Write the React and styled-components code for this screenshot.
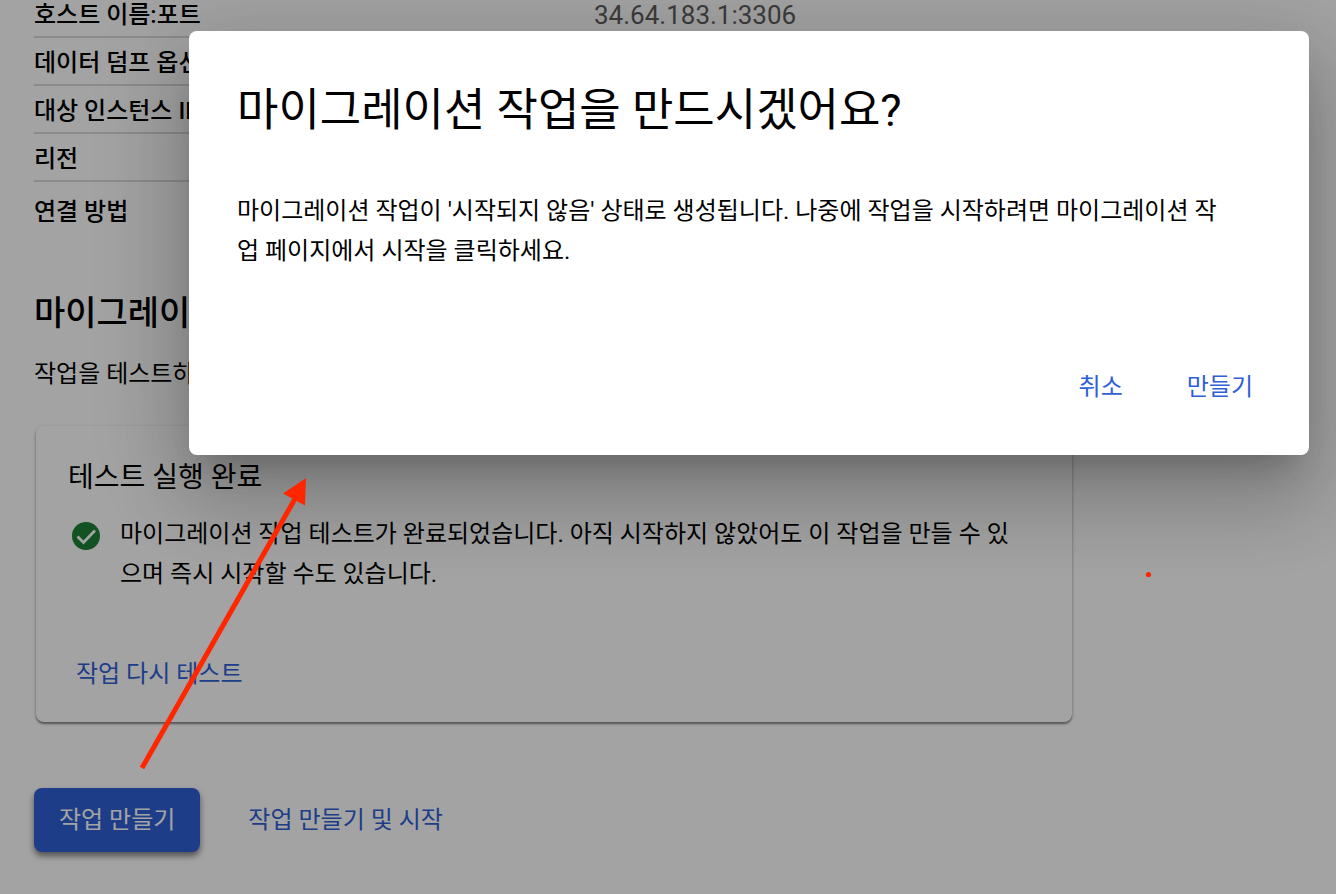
import React from "react";
import { styled, createGlobalStyle } from "styled-components";

/*          STYLES          */
const GlobalStyle = createGlobalStyle`
*{
box-sizing: border-box;
}
body{
margin: 0;
background-color: #ffffff;
color: #000000;
font-family: Roboto, "Noto Sans CJK KR", sans-serif;
font-size: 24px;
line-height: 40px;
overflow: hidden;
}
`
//Page
const Page = styled.main`
position: relative;
min-height: 100vh;
padding: 0 34px;
overflow: hidden;
`
const Content = styled.div`
max-width: 1040px;
`
//Details
const DetailTable = styled.table`
width: 100%;
border-collapse: collapse;
table-layout: fixed;
`
const DetailRow = styled.tr`
height: ${({$height}) => $height || 48}px;
border-bottom: ${({$last}) => $last ? "none" : "2px solid #dadada"};
`
const DetailName = styled.th`
width: 560px;
padding: 0 0 6px;
font-weight: 500;
line-height: 30px;
text-align: left;
vertical-align: bottom;
`
const DetailValue = styled.td`
padding: 0 0 6px;
color: #5f5f5f;
font-size: 26px;
line-height: 30px;
vertical-align: bottom;
`
//Test section
const SectionTitle = styled.h2`
margin: 52px 0 0;
font-size: 34px;
font-weight: 500;
line-height: 56px;
`
const SectionText = styled.p`
margin: 13px 0 0;
`
const Card = styled.section`
margin: 32px 2px 0;
padding: 32px 32px 24px;
border-radius: 8px;
box-shadow: 0 2px 2px rgba(0,0,0,.4), 0 1px 4px rgba(0,0,0,.16);
`
const CardTitle = styled.h3`
margin: 0;
font-size: 28px;
font-weight: 400;
line-height: 40px;
`
const Status = styled.div`
display: flex;
gap: 16px;
margin-top: 16px;
`
const StatusIcon = styled.svg`
flex: none;
width: 36px;
height: 36px;
margin-top: 4px;
`
const StatusText = styled.p`
margin: 0;
`
const CardActions = styled.div`
margin-top: 56px;
`
//Buttons
const TextButton = styled.button`
height: ${({$tall}) => $tall ? 64 : 48}px;
padding: 0 8px;
border: none;
border-radius: 8px;
background: none;
color: #3060d6;
font: inherit;
cursor: pointer;
`
const PrimaryButton = styled(TextButton)`
padding: 0 25px;
background-color: #3060d6;
color: #ffffff;
box-shadow: 0 4px 6px rgba(0,0,0,.5);
`
const PageActions = styled.div`
display: flex;
gap: 40px;
margin-top: 66px;
`
//Dialog
const Backdrop = styled.div`
position: absolute;
inset: 0;
background-color: rgba(0,0,0,.36);
`
const Dialog = styled.div`
position: absolute;
top: 31px;
left: 189px;
right: 27px;
padding: 48px 48px 44px;
border-radius: 8px;
background-color: #ffffff;
box-shadow: 0 22px 30px -14px rgba(0,0,0,.2), 0 48px 76px 6px rgba(0,0,0,.14), 0 18px 92px 16px rgba(0,0,0,.12);
`
const DialogTitle = styled.h1`
margin: 0;
font-size: 45px;
font-weight: 400;
line-height: 64px;
`
const DialogText = styled.p`
margin: 48px 0 0;
`
const DialogActions = styled.div`
display: flex;
justify-content: flex-end;
gap: 48px;
margin-top: 92px;
`
//Markup over the page
const Marks = styled.svg`
position: absolute;
top: 0;
left: 0;
pointer-events: none;
`

const details = [
    {name: "호스트 이름:포트", value: "34.64.183.1:3306", height: 36},
    {name: "데이터 덤프 옵션"},
    {name: "대상 인스턴스 ID"},
    {name: "리전"},
    {name: "연결 방법", height: 52, last: true},
]

/*          COMPONENTS          */
function Details(){
    return(
        <DetailTable>
            <tbody>
                {details.map((detail) => (
                    <DetailRow key={detail.name} $height={detail.height} $last={detail.last}>
                        <DetailName scope="row">{detail.name}</DetailName>
                        <DetailValue>{detail.value}</DetailValue>
                    </DetailRow>
                ))}
            </tbody>
        </DetailTable>
    );
}

function TestCard(){
    return(
        <Card>
            <CardTitle>테스트 실행 완료</CardTitle>
            <Status>
                <StatusIcon viewBox="0 0 36 36" aria-hidden="true">
                    <circle cx="18" cy="18" r="14" fill="#1e8136" />
                    <path d="M9.5 18.5l6 6L27 12.5" fill="none" stroke="#ffffff" strokeWidth="2.8" />
                </StatusIcon>
                <StatusText>
                    마이그레이션 작업 테스트가 완료되었습니다. 아직 시작하지 않았어도 이 작업을 만들 수 있<br/>
                    으며 즉시 시작할 수도 있습니다.
                </StatusText>
            </Status>
            <CardActions>
                <TextButton type="button">작업 다시 테스트</TextButton>
            </CardActions>
        </Card>
    );
}

function CreateDialog(){
    return(
        <Dialog role="dialog" aria-modal="true" aria-labelledby="dialog-title">
            <DialogTitle id="dialog-title">마이그레이션 작업을 만드시겠어요?</DialogTitle>
            <DialogText>
                마이그레이션 작업이 '시작되지 않음' 상태로 생성됩니다. 나중에 작업을 시작하려면 마이그레이션 작<br/>
                업 페이지에서 시작을 클릭하세요.
            </DialogText>
            <DialogActions>
                <TextButton type="button">취소</TextButton>
                <TextButton type="button">만들기</TextButton>
            </DialogActions>
        </Dialog>
    );
}

function App(){
    return(
        <>
            <GlobalStyle />
            <Page>
                <Content>
                    <Details />
                    <SectionTitle>마이그레이션</SectionTitle>
                    <SectionText>작업을 테스트하기</SectionText>
                    <TestCard />
                    <PageActions>
                        <PrimaryButton type="button" $tall>작업 만들기</PrimaryButton>
                        <TextButton type="button" $tall>작업 만들기 및 시작</TextButton>
                    </PageActions>
                </Content>
                <Backdrop />
                <CreateDialog />
                <Marks width="1336" height="894" viewBox="0 0 1336 894" aria-hidden="true">
                    <path d="M142 768L296 497" stroke="#ff2600" strokeWidth="5" />
                    <path d="M306 478L283 493.500L305 505.500Z" fill="#ff2600" />
                    <circle cx="1148.500" cy="574.500" r="2.600" fill="#ff2600" />
                </Marks>
            </Page>
        </>
    );
}

export default App;
